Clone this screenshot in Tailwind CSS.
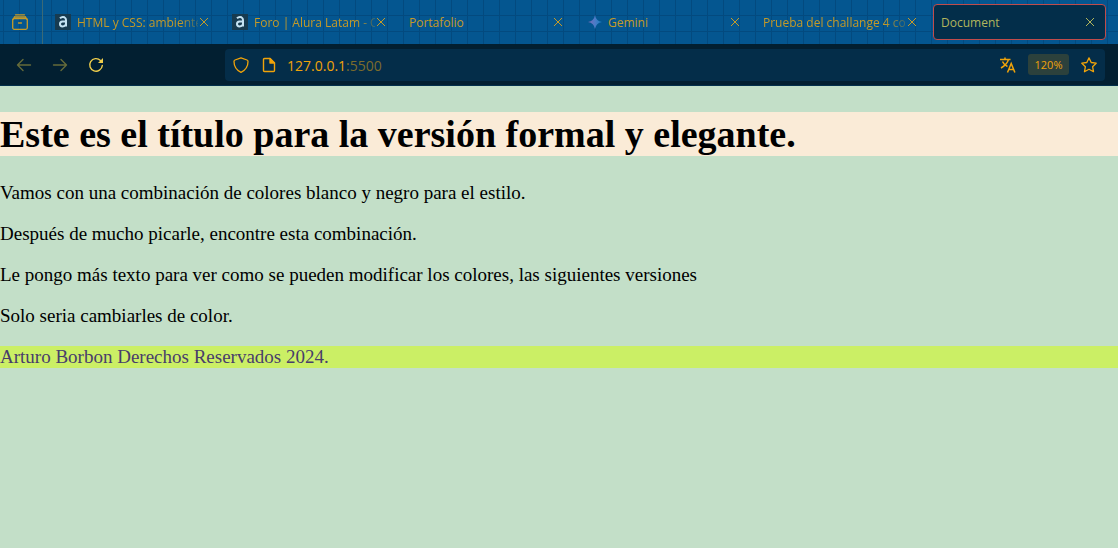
<!DOCTYPE html>
<html lang="es">
<head>
<meta charset="utf-8">
<meta name="viewport" content="width=device-width, initial-scale=1">
<title>Document</title>
<script src="https://cdn.jsdelivr.net/npm/@tailwindcss/browser@4"></script>
</head>
<body class="flex min-h-screen flex-col bg-[#c3dfc8]">
<header class="font-['Open_Sans','Noto_Sans',sans-serif] text-xs">
  <!-- Tab strip -->
  <div class="flex h-11 items-stretch bg-[#045690] bg-[linear-gradient(to_right,transparent_15px,#034a7f_15px),linear-gradient(to_bottom,transparent_15px,#034a7f_15px)] bg-size-[16px_16px] bg-position-[4px_0px] pr-[9px] text-[#c49a28]">
    <button aria-label="Pestañas recientes" class="flex w-[43px] shrink-0 items-center border-r border-[#3b6a76] pl-3">
      <svg class="size-4" viewBox="0 0 16 16" fill="none" stroke="currentColor" stroke-width="1.3" stroke-linecap="round"><path d="M3.500 .8h9M2.500 3h11"/><rect x=".7" y="4.500" width="14.6" height="10.800" rx="1.500"/><path d="M2.500 3 .9 5.500M13.500 3l1.600 2.500M6.500 9h3"/></svg>
    </button>
    <nav aria-label="Pestañas" class="grid min-w-0 flex-1 grid-cols-6 items-center pl-1">
      <div class="flex min-w-0 items-center pr-3.5 pl-2">
        <svg class="mr-1.5 size-4 shrink-0" viewBox="0 0 16 16" aria-hidden="true"><path fill="#173b50" d="M0 0h16v16H0z"/><path d="M5 4.300Q7 2.300 9.500 3.300Q11 4 11 6v6.500M11 7.500H7.500Q5 7.600 5 10t2.500 2.400Q11 12.300 11 9.500" fill="none" stroke="#c5e3f3" stroke-width="2"/></svg>
        <a href="#" class="min-w-0 flex-1 overflow-hidden pt-0.5 whitespace-nowrap mask-r-from-85% mask-r-to-105%">HTML y CSS: ambiente</a>
        <button aria-label="Cerrar pestaña" class="shrink-0"><svg class="size-3" viewBox="0 0 12 12" stroke="currentColor" fill="none"><path d="m2 2 8 8m0-8-8 8"/></svg></button>
      </div>
      <div class="flex min-w-0 items-center pr-3.5 pl-2">
        <svg class="mr-1.5 size-4 shrink-0" viewBox="0 0 16 16" aria-hidden="true"><path fill="#173b50" d="M0 0h16v16H0z"/><path d="M5 4.300Q7 2.300 9.500 3.300Q11 4 11 6v6.500M11 7.500H7.500Q5 7.600 5 10t2.500 2.400Q11 12.300 11 9.500" fill="none" stroke="#c5e3f3" stroke-width="2"/></svg>
        <a href="#" class="min-w-0 flex-1 overflow-hidden pt-0.5 whitespace-nowrap mask-r-from-85% mask-r-to-105%">Foro | Alura Latam - C</a>
        <button aria-label="Cerrar pestaña" class="shrink-0"><svg class="size-3" viewBox="0 0 12 12" stroke="currentColor" fill="none"><path d="m2 2 8 8m0-8-8 8"/></svg></button>
      </div>
      <div class="flex min-w-0 items-center pr-3.5 pl-2">
        <a href="#" class="min-w-0 flex-1 overflow-hidden pt-0.5 whitespace-nowrap">Portafolio</a>
        <button aria-label="Cerrar pestaña" class="shrink-0"><svg class="size-3" viewBox="0 0 12 12" stroke="currentColor" fill="none"><path d="m2 2 8 8m0-8-8 8"/></svg></button>
      </div>
      <div class="flex min-w-0 items-center pr-3.5 pl-2">
        <svg class="mr-1.5 size-4 shrink-0" viewBox="0 0 16 16" aria-hidden="true"><defs><linearGradient id="spark"><stop offset="0" stop-color="#7b68b5"/><stop offset=".5" stop-color="#4b7cc8"/><stop offset="1" stop-color="#187fc0"/></linearGradient></defs><path fill="url(#spark)" d="M9 1q1 6 7 7-6 1-7 7-1-6-7-7 6-1 7-7"/></svg>
        <a href="#" class="min-w-0 flex-1 overflow-hidden pt-0.5 whitespace-nowrap">Gemini</a>
        <button aria-label="Cerrar pestaña" class="shrink-0"><svg class="size-3" viewBox="0 0 12 12" stroke="currentColor" fill="none"><path d="m2 2 8 8m0-8-8 8"/></svg></button>
      </div>
      <div class="flex min-w-0 items-center pr-3.5 pl-2">
        <a href="#" class="min-w-0 flex-1 overflow-hidden pt-0.5 whitespace-nowrap mask-r-from-85% mask-r-to-105%">Prueba del challange 4 con</a>
        <button aria-label="Cerrar pestaña" class="shrink-0"><svg class="size-3" viewBox="0 0 12 12" stroke="currentColor" fill="none"><path d="m2 2 8 8m0-8-8 8"/></svg></button>
      </div>
      <div class="mr-[3px] ml-px flex h-9 min-w-0 items-center rounded border border-[#c14c4b] bg-[#032e4a] pr-[9px] pl-[7px] text-[#b2b55c]">
        <a href="#" aria-current="page" class="min-w-0 flex-1 overflow-hidden pt-0.5 whitespace-nowrap">Document</a>
        <button aria-label="Cerrar pestaña" class="shrink-0"><svg class="size-3" viewBox="0 0 12 12" stroke="currentColor" fill="none"><path d="m2 2 8 8m0-8-8 8"/></svg></button>
      </div>
    </nav>
  </div>
  <!-- Navigation bar -->
  <div class="flex h-[42px] items-center border-b border-[#03304c] bg-[#021f31] pr-[13px] pl-4 text-[#f0a30a]">
    <div class="flex w-[209px] shrink-0 gap-5">
      <button aria-label="Atrás" class="text-[#656b3a]"><svg class="size-4" viewBox="0 0 16 16" fill="none" stroke="currentColor" stroke-width="1.400" stroke-linecap="round" stroke-linejoin="round"><path d="M14.500 8H1.500M7 2.500 1.500 8 7 13.500"/></svg></button>
      <button aria-label="Adelante" class="text-[#656b3a]"><svg class="size-4" viewBox="0 0 16 16" fill="none" stroke="currentColor" stroke-width="1.400" stroke-linecap="round" stroke-linejoin="round"><path d="M1.500 8h13M9 2.500 14.500 8 9 13.500"/></svg></button>
      <button aria-label="Recargar" class="text-[#f0ce4c]"><svg class="size-4" viewBox="0 0 16 16" fill="none" stroke="currentColor" stroke-width="1.400" stroke-linecap="round"><path d="M14.300 8.500A6.300 6.300 0 1 1 12.500 3.500"/><path fill="currentColor" stroke="none" d="M15 1v5H10z"/></svg></button>
    </div>
    <div class="flex h-8 min-w-0 flex-1 items-center rounded bg-[#042d49] pr-2 pl-2">
      <button aria-label="Protección" class="mr-3 shrink-0"><svg class="size-4" viewBox="0 0 16 16" fill="none" stroke="currentColor" stroke-width="1.300" stroke-linejoin="round"><path d="M8 .8 14 3q1 .4 1 1.500Q15 12 8 15.300 1 12 1 4.500 1 3.400 2 3z"/></svg></button>
      <button aria-label="Información del sitio" class="mr-[10px] shrink-0"><svg class="size-4" viewBox="0 0 16 16" fill="none" stroke="currentColor" stroke-width="1.400" stroke-linejoin="round"><path d="M3.500 1.500H9L13.500 6v7.500q0 1-1 1h-9q-1 0-1-1v-11q0-1 1-1z"/><path fill="currentColor" d="M9 1.500V6h4.500z"/></svg></button>
      <div class="min-w-0 flex-1 pt-0.5 text-sm"><a href="#">127.0.0.1<span class="text-[#7c6c2c]">:5500</span></a></div>
      <button aria-label="Traducir" class="mr-3 shrink-0"><svg class="size-4" viewBox="0 0 16 16" fill="none" stroke="currentColor" stroke-width="1.500"><path d="M0 2.500h10.500M5 .5v2M8.500 2.500Q7 7.500 1 11M2.500 4.500Q4 8 7.500 9.500M7.500 15.500l3.700-9 3.700 9M8.800 12.500h4.800"/></svg></button>
      <button class="mr-3 h-[21px] w-[41px] shrink-0 rounded-[3px] bg-[#2c413c] pt-0.5 text-[11px]">120%</button>
      <button aria-label="Marcador" class="shrink-0"><svg class="size-4" viewBox="0 0 16 16" fill="none" stroke="currentColor" stroke-width="1.300" stroke-linejoin="round"><path d="m8 .9 2.200 4.600 5 .7-3.600 3.500.9 5L8 12.300l-4.500 2.400.9-5L.8 6.200l5-.7z"/></svg></button>
    </div>
  </div>
</header>
<main class="flex-1 font-['Liberation_Serif',serif] text-[19px] leading-[22px] text-black">
  <h1 class="mt-[26px] mb-[26px] bg-[#faebd7] text-[38px] leading-[44px] font-bold">Este es el título para la versión formal y elegante.</h1>
  <div class="flex flex-col gap-[19px]">
    <p>Vamos con una combinación de colores blanco y negro para el estilo.</p>
    <p>Después de mucho picarle, encontre esta combinación.</p>
    <p>Le pongo más texto para ver como se pueden modificar los colores, las siguientes versiones</p>
    <p>Solo seria cambiarles de color.</p>
    <footer class="bg-[#cbef65] text-[#483d6b]">Arturo Borbon Derechos Reservados 2024.</footer>
  </div>
</main>
</body>
</html>
